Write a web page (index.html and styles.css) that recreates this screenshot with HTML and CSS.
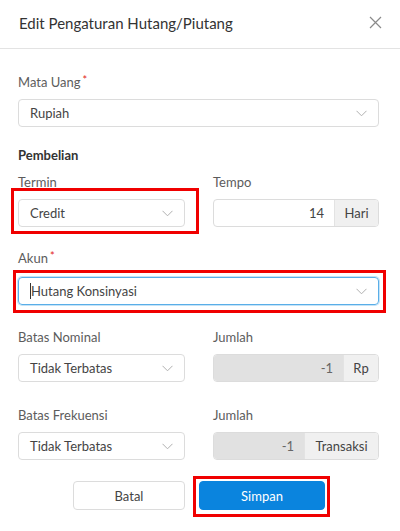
FILE: index.html
```html
<!DOCTYPE html>
<html>
<head>
<meta charset="utf-8">
<link rel="stylesheet" href="styles.css">
</head>
<body>
<div class="modal">
  <div class="header">
    <div class="title">Edit Pengaturan Hutang/Piutang</div>
    <svg class="close" width="13" height="13" viewBox="0 0 13 13"><path d="M1 1L12 12M12 1L1 12" stroke="#8a8a8a" stroke-width="1.2" fill="none"/></svg>
  </div>
  <div class="body">
    <div class="label">Mata Uang<span class="req">*</span></div>
    <div class="select"><span>Rupiah</span><svg class="chev" width="11" height="7" viewBox="0 0 11 7"><path d="M0.5 0.8L5.5 5.8L10.5 0.8" stroke="#b0b0b0" stroke-width="1" fill="none"/></svg></div>

    <div class="section">Pembelian</div>
    <div class="row">
      <div class="col">
        <div class="label">Termin</div>
        <div class="select hl-credit"><span>Credit</span><svg class="chev" width="11" height="7" viewBox="0 0 11 7"><path d="M0.5 0.8L5.5 5.8L10.5 0.8" stroke="#b0b0b0" stroke-width="1" fill="none"/></svg></div>
      </div>
      <div class="col">
        <div class="label">Tempo</div>
        <div class="group"><div class="val">14</div><div class="addon w-hari">Hari</div></div>
      </div>
    </div>

    <div class="label akun-label">Akun<span class="req">*</span></div>
    <div class="select focus hl-akun"><span><span class="caret"></span>Hutang Konsinyasi</span><svg class="chev" width="11" height="7" viewBox="0 0 11 7"><path d="M0.5 0.8L5.5 5.8L10.5 0.8" stroke="#b0b0b0" stroke-width="1" fill="none"/></svg></div>

    <div class="row gap-top">
      <div class="col">
        <div class="label">Batas Nominal</div>
        <div class="select"><span>Tidak Terbatas</span><svg class="chev" width="11" height="7" viewBox="0 0 11 7"><path d="M0.5 0.8L5.5 5.8L10.5 0.8" stroke="#b0b0b0" stroke-width="1" fill="none"/></svg></div>
      </div>
      <div class="col">
        <div class="label">Jumlah</div>
        <div class="group"><div class="val disabled">-1</div><div class="addon w-rp">Rp</div></div>
      </div>
    </div>

    <div class="row gap-top2">
      <div class="col">
        <div class="label">Batas Frekuensi</div>
        <div class="select"><span>Tidak Terbatas</span><svg class="chev" width="11" height="7" viewBox="0 0 11 7"><path d="M0.5 0.8L5.5 5.8L10.5 0.8" stroke="#b0b0b0" stroke-width="1" fill="none"/></svg></div>
      </div>
      <div class="col">
        <div class="label">Jumlah</div>
        <div class="group"><div class="val disabled">-1</div><div class="addon w-trx">Transaksi</div></div>
      </div>
    </div>

    <div class="actions">
      <button class="btn">Batal</button>
      <button class="btn primary hl-simpan">Simpan</button>
    </div>
  </div>
</div>
</body>
</html>
```
FILE: styles.css
```css
* { box-sizing: border-box; }
html, body { margin: 0; padding: 0; background: #fff; }
body {
  font-family: "Lato", "Noto Sans", sans-serif;
  font-size: 13px;
  color: #444;
  width: 400px;
  height: 531px;
  overflow: hidden;
}
.header {
  height: 49px;
  border-bottom: 1px solid #e3e3e3;
  display: flex;
  align-items: center;
  justify-content: space-between;
  padding: 0 18px 3px 19px;
}
.title { font-size: 15px; color: #333; }
.close { margin-right: 0; }
.body { padding: 23px 21px 0 18px; }
.label {
  height: 20px;
  line-height: 20px;
  color: #5c5c5c;
  margin-bottom: 7px;
}
.req { color: #e2231a; font-size: 11px; vertical-align: top; margin-left: 2px; line-height: 16px; }
.select {
  position: relative;
  height: 28px;
  border: 1px solid #dcdcdc;
  border-radius: 4px;
  display: flex;
  align-items: center;
  justify-content: space-between;
  padding: 0 11px 0 11px;
  color: #444;
}
.select.focus {
  border-color: #5aaee8;
  box-shadow: 0 0 0 1px rgba(90, 174, 232, 0.35);
}
.caret {
  display: inline-block;
  width: 1px;
  height: 16px;
  background: #333;
  vertical-align: -3px;
}
.section {
  font-weight: bold;
  color: #333;
  height: 20px;
  line-height: 20px;
  margin-top: 18px;
  margin-bottom: 7px;
}
.row {
  display: grid;
  grid-template-columns: 167px 166px;
  column-gap: 28px;
}
.group {
  height: 28px;
  display: flex;
  border: 1px solid #dcdcdc;
  border-radius: 4px;
  overflow: hidden;
}
.val {
  flex: 1;
  text-align: right;
  line-height: 26px;
  padding-right: 10px;
  color: #444;
}
.val.disabled { background: #e1e1e1; color: #666; }
.addon {
  background: #f0f0f0;
  border-left: 1px solid #e3e3e3;
  line-height: 26px;
  text-align: center;
  color: #444;
}
.w-hari { width: 44px; }
.w-rp { width: 35px; }
.w-trx { width: 74px; }
.akun-label { margin-top: 21px; margin-bottom: 9px; }
.gap-top { margin-top: 22px; }
.gap-top2 { margin-top: 23px; }
.actions {
  display: flex;
  justify-content: center;
  gap: 14px;
  margin-top: 21px;
  padding-left: 1px;
}
.btn {
  position: relative;
  height: 29px;
  width: 112px;
  border: 1px solid #dcdcdc;
  border-radius: 4px;
  background: #fff;
  font-family: inherit;
  font-size: 13px;
  color: #444;
}
.btn.primary {
  width: 126px;
  background: #0a84de;
  border-color: #0a84de;
  color: #fff;
}
.hl-credit::after,
.hl-akun::after,
.hl-simpan::after {
  content: "";
  position: absolute;
  border: 3px solid #f00000;
  pointer-events: none;
}
.hl-credit::after { left: -8px; top: -12px; right: -15px; bottom: -8px; }
.hl-akun::after { left: -6px; top: -8px; right: -8px; bottom: -9px; }
.hl-simpan::after { left: -7px; top: -6px; right: -6px; bottom: -8px; }
```
